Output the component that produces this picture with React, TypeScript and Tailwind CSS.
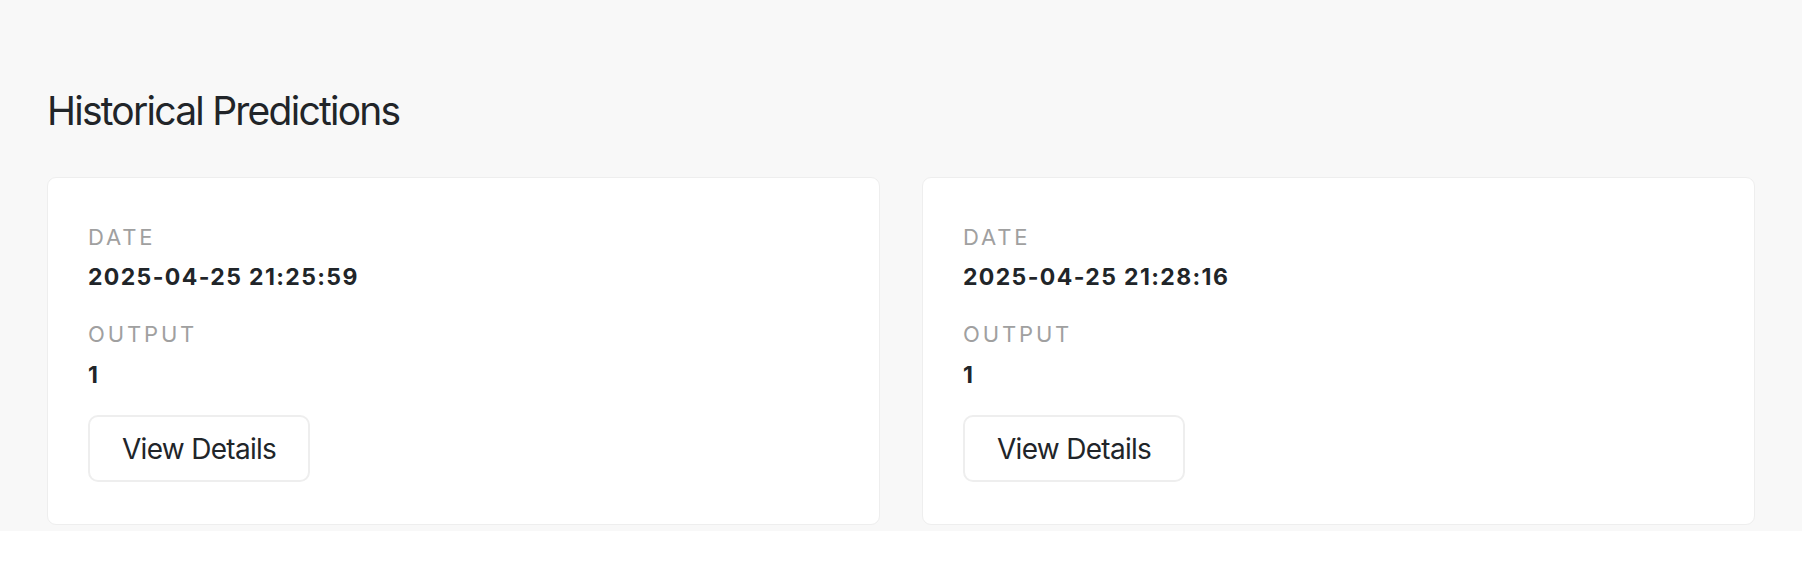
const predictions = [
  { date: "2025-04-25 21:25:59", output: "1" },
  { date: "2025-04-25 21:28:16", output: "1" },
];

function PredictionCard({ date, output }: { date: string; output: string }) {
  return (
    <div className="rounded-[9px] border border-[#eeeeee] bg-white px-[40px] pt-[46px] pb-[42px]">
      <div className="text-[22px] leading-[26px] tracking-[0.13em] text-[#a0a0a0]">DATE</div>
      <div className="mt-[14px] text-[23px] leading-[26px] font-bold tracking-[0.06em] text-[#212529]">
        {date}
      </div>
      <div className="mt-[31px] text-[22px] leading-[26px] tracking-[0.13em] text-[#a0a0a0]">OUTPUT</div>
      <div className="mt-[15px] text-[23px] leading-[26px] font-bold text-[#212529]">{output}</div>
      <button className="mt-[27px] h-[67px] rounded-[10px] border-2 border-[#eeeeee] bg-white px-[32px] text-[28px] tracking-[-0.025em] text-[#212529]">
        View Details
      </button>
    </div>
  );
}

export default function App() {
  return (
    <div className="bg-white font-['Inter',sans-serif] h-[570px]">
      <section className="bg-[#f8f8f8] px-[47px] pt-[88px] pb-[6px]">
        <h1 className="text-[39px] leading-[46px] font-normal tracking-[-0.045em] text-[#212529]">
          Historical Predictions
        </h1>
        <div className="mt-[43px] grid grid-cols-2 gap-[42px]">
          {predictions.map((p) => (
            <PredictionCard key={p.date} date={p.date} output={p.output} />
          ))}
        </div>
      </section>
    </div>
  );
}
